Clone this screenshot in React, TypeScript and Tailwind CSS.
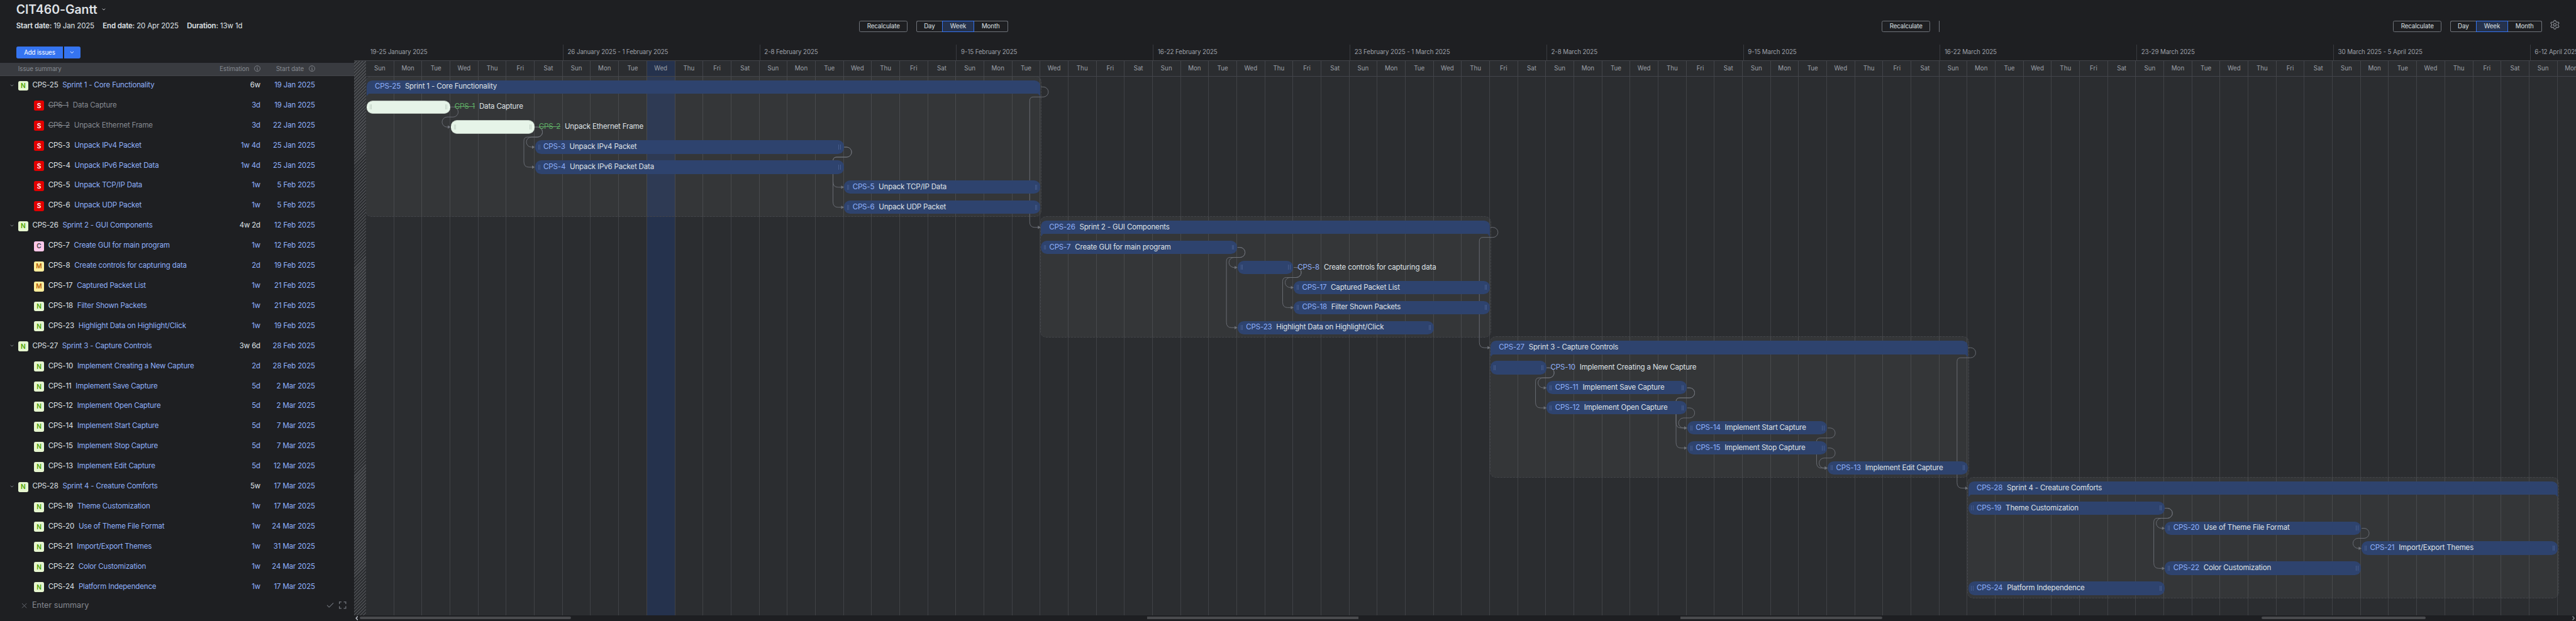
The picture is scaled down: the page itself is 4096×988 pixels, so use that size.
import { Check, ChevronDown, Settings, X } from "lucide-react";

type Tag = "N" | "S" | "C" | "M";

interface Issue {
  id: string;
  title: string;
  tag: Tag;
  estimation: string;
  date: string;
  start: number;
  end: number;
  sprint?: number;
  done?: boolean;
  outside?: boolean;
}

const DAY = 50.4;
const ROW = 36;

const issues: Issue[] = [
  { id: "CPS-25", title: "Sprint 1 - Core Functionality", tag: "N", estimation: "6w", date: "19 Jan 2025", start: 0, end: 24, sprint: 7 },
  { id: "CPS-1", title: "Data Capture", tag: "S", estimation: "3d", date: "19 Jan 2025", start: 0, end: 3, done: true, outside: true },
  { id: "CPS-2", title: "Unpack Ethernet Frame", tag: "S", estimation: "3d", date: "22 Jan 2025", start: 3, end: 6, done: true, outside: true },
  { id: "CPS-3", title: "Unpack IPv4 Packet", tag: "S", estimation: "1w 4d", date: "25 Jan 2025", start: 6, end: 17 },
  { id: "CPS-4", title: "Unpack IPv6 Packet Data", tag: "S", estimation: "1w 4d", date: "25 Jan 2025", start: 6, end: 17 },
  { id: "CPS-5", title: "Unpack TCP/IP Data", tag: "S", estimation: "1w", date: "5 Feb 2025", start: 17, end: 24 },
  { id: "CPS-6", title: "Unpack UDP Packet", tag: "S", estimation: "1w", date: "5 Feb 2025", start: 17, end: 24 },
  { id: "CPS-26", title: "Sprint 2 - GUI Components", tag: "N", estimation: "4w 2d", date: "12 Feb 2025", start: 24, end: 40, sprint: 6 },
  { id: "CPS-7", title: "Create GUI for main program", tag: "C", estimation: "1w", date: "12 Feb 2025", start: 24, end: 31 },
  { id: "CPS-8", title: "Create controls for capturing data", tag: "M", estimation: "2d", date: "19 Feb 2025", start: 31, end: 33, outside: true },
  { id: "CPS-17", title: "Captured Packet List", tag: "M", estimation: "1w", date: "21 Feb 2025", start: 33, end: 40 },
  { id: "CPS-18", title: "Filter Shown Packets", tag: "N", estimation: "1w", date: "21 Feb 2025", start: 33, end: 40 },
  { id: "CPS-23", title: "Highlight Data on Highlight/Click", tag: "N", estimation: "1w", date: "19 Feb 2025", start: 31, end: 38 },
  { id: "CPS-27", title: "Sprint 3 - Capture Controls", tag: "N", estimation: "3w 6d", date: "28 Feb 2025", start: 40, end: 57, sprint: 7 },
  { id: "CPS-10", title: "Implement Creating a New Capture", tag: "N", estimation: "2d", date: "28 Feb 2025", start: 40, end: 42, outside: true },
  { id: "CPS-11", title: "Implement Save Capture", tag: "N", estimation: "5d", date: "2 Mar 2025", start: 42, end: 47 },
  { id: "CPS-12", title: "Implement Open Capture", tag: "N", estimation: "5d", date: "2 Mar 2025", start: 42, end: 47 },
  { id: "CPS-14", title: "Implement Start Capture", tag: "N", estimation: "5d", date: "7 Mar 2025", start: 47, end: 52 },
  { id: "CPS-15", title: "Implement Stop Capture", tag: "N", estimation: "5d", date: "7 Mar 2025", start: 47, end: 52 },
  { id: "CPS-13", title: "Implement Edit Capture", tag: "N", estimation: "5d", date: "12 Mar 2025", start: 52, end: 57 },
  { id: "CPS-28", title: "Sprint 4 - Creature Comforts", tag: "N", estimation: "5w", date: "17 Mar 2025", start: 57, end: 78, sprint: 6 },
  { id: "CPS-19", title: "Theme Customization", tag: "N", estimation: "1w", date: "17 Mar 2025", start: 57, end: 64 },
  { id: "CPS-20", title: "Use of Theme File Format", tag: "N", estimation: "1w", date: "24 Mar 2025", start: 64, end: 71 },
  { id: "CPS-21", title: "Import/Export Themes", tag: "N", estimation: "1w", date: "31 Mar 2025", start: 71, end: 78 },
  { id: "CPS-22", title: "Color Customization", tag: "N", estimation: "1w", date: "24 Mar 2025", start: 64, end: 71 },
  { id: "CPS-24", title: "Platform Independence", tag: "N", estimation: "1w", date: "17 Mar 2025", start: 57, end: 64 },
];

/* Row index of the predecessor, row index of the successor. */
const links: [number, number][] = [
  [0, 7], [1, 2], [2, 3], [2, 4], [3, 5], [3, 6],
  [7, 13], [8, 9], [8, 12], [9, 10], [9, 11],
  [13, 20], [14, 15], [14, 16], [15, 17], [15, 18], [16, 17], [17, 19], [18, 19],
  [21, 22], [21, 24], [22, 23],
];

const weeks = [
  "19-25 January 2025",
  "26 January 2025 - 1 February 2025",
  "2-8 February 2025",
  "9-15 February 2025",
  "16-22 February 2025",
  "23 February 2025 - 1 March 2025",
  "2-8 March 2025",
  "9-15 March 2025",
  "16-22 March 2025",
  "23-29 March 2025",
  "30 March 2025 - 5 April 2025",
  "6-12 April 2025",
];

const dayNames = ["Sun", "Mon", "Tue", "Wed", "Thu", "Fri", "Sat"];
const days = Array.from({ length: 79 }, (_, i) => i);
const TODAY = 10;

const tagStyle: Record<Tag, string> = {
  N: "bg-[#e6f6cf] text-[#4da400]",
  S: "bg-[#e30000] text-white",
  C: "bg-[#ffc8ea] text-[#444444]",
  M: "bg-[#ffee9c] text-[#b45f06]",
};

function linkPath(from: number, to: number) {
  const x1 = issues[from].end * DAY + 0.6;
  const x2 = issues[to].start * DAY + 0.2;
  const y1 = from * ROW + 19.5;
  const y2 = to * ROW + 19.5;
  const head = `M${x1} ${y1}h4.5a9 9 0 0 1 0 18`;
  if (to - from === 1) {
    return `${head}H${x2 - 6}a9 9 0 0 0 0 18H${x2 - 3}`;
  }
  return `${head}H${x2 - 13}q-6.5 0 -6.5 7V${y2 - 10}q0 10 9 10H${x2 - 3}`;
}

function InfoIcon() {
  return (
    <svg viewBox="0 0 12 12" className="size-[11.5px]" fill="none" stroke="#868a91">
      <circle cx="6" cy="6" r="5.3" />
      <path d="M4.7 5.2H6.2V8.6M4.6 8.7H7.6" strokeWidth="0.9" />
      <circle cx="6" cy="3.3" r="0.4" fill="#868a91" strokeWidth="0.5" />
    </svg>
  );
}

function ExpandIcon() {
  return (
    <svg viewBox="0 0 13 13" className="ml-[8px] size-[13px]" fill="none" stroke="currentColor" strokeWidth="1.5">
      <path d="M0.75 4.5V0.75H4.5M8.5 0.75H12.25V4.5M12.25 8.5V12.25H8.5M4.5 12.25H0.75V8.5" />
    </svg>
  );
}

function Recalculate() {
  return (
    <button className="flex h-[21px] w-[87px] items-center justify-center rounded-[3px] border border-[#6f737a] text-[11px] leading-none tracking-[-0.12px] text-[#dfe1e5]">
      Recalculate
    </button>
  );
}

function ScaleSwitch() {
  return (
    <div className="ml-[15px] flex h-[21px] text-[11px] leading-none tracking-[-0.12px] text-[#dfe1e5]">
      <button className="flex w-[47px] items-center justify-center rounded-l-[3px] border border-r-0 border-[#6f737a]">Day</button>
      <button className="flex w-[57px] items-center justify-center border border-[#3574f0] bg-[#25324d]">Week</button>
      <button className="flex w-[61px] items-center justify-center rounded-r-[3px] border border-l-0 border-[#6f737a]">Month</button>
    </div>
  );
}

function IssueRow({ issue }: { issue: Issue }) {
  return (
    <div className="flex h-9 items-center text-[13px] leading-none tracking-[-0.18px]">
      <div className={`flex w-[397px] items-center whitespace-nowrap ${issue.sprint ? "pl-[17px]" : "pl-[61px]"}`}>
        {issue.sprint && <ChevronDown className="mr-[6.5px] mb-[2px] size-[9px] text-[#868a91]" strokeWidth={2.6} />}
        <span className={`flex size-[18px] shrink-0 items-center justify-center rounded-[3px] pb-px text-[11.5px] font-semibold tracking-normal ${tagStyle[issue.tag]}`}>
          {issue.tag}
        </span>
        <span className={`mb-[1.8px] ml-[7.5px] ${issue.done ? "text-[#868a91] line-through" : "text-[#dfe1e5]"}`}>{issue.id}</span>
        <span className={`mb-[1.8px] ml-[7.7px] ${issue.done ? "text-[#868a91]" : "text-[#8fb0fa]"}`}>{issue.title}</span>
      </div>
      <span className={`mb-[1.8px] w-[70px] text-right ${issue.sprint ? "text-[#dfe1e5]" : "text-[#8fb0fa]"}`}>{issue.estimation}</span>
      <span className="mb-[1.8px] w-[98px] text-right text-[#8fb0fa]">{issue.date}</span>
    </div>
  );
}

function IssuePanel() {
  return (
    <aside className="flex w-[635px] shrink-0 flex-col">
      <header className="h-[113px] pl-[29px]">
        <h1 className="flex items-center gap-[7px] pt-[4px] text-[22px] leading-[25px] font-semibold tracking-[-0.08px] text-[#dfe1e5]">
          CIT460-Gantt
          <ChevronDown className="size-[9px]" strokeWidth={2.6} />
        </h1>
        <p className="mt-[9px] flex gap-[15px] text-[13px] leading-[17px] tracking-[-0.18px] text-[#dfe1e5]">
          <span><b className="font-semibold">Start date:</b> 19 Jan 2025</span>
          <span><b className="font-semibold">End date:</b> 20 Apr 2025</span>
          <span><b className="font-semibold">Duration:</b> 13w 1d</span>
        </p>
        <div className="mt-[29px] flex h-[21px] gap-[2px] text-white">
          <button className="flex w-[84px] items-center justify-center rounded-l-[3px] bg-[#3574f0] text-[11px] leading-none tracking-[-0.12px]">
            Add issues
          </button>
          <button className="flex w-[29px] items-center justify-center rounded-r-[3px] bg-[#3574f0]">
            <ChevronDown className="size-[10px]" strokeWidth={2.6} />
          </button>
        </div>
      </header>
      <div className="flex h-[23px] items-center border-b border-[#43454a] bg-[#393b40] pb-px text-[11px] leading-none tracking-[-0.08px] text-[#868a91]">
        <span className="w-[369px] pl-[32.5px]">Issue summary</span>
        <span className="flex w-[98px] items-center justify-end gap-[8.5px]">Estimation <InfoIcon /></span>
        <span className="flex w-[98px] items-center justify-end gap-[8.5px]">Start date <InfoIcon /></span>
      </div>
      <div className="h-[936px]">
        {issues.map((issue) => <IssueRow key={issue.id} issue={issue} />)}
      </div>
      <div className="flex h-[29px] items-center pr-[14px] pl-[36px] text-[#6f737a]">
        <X className="size-[15px]" strokeWidth={1.6} />
        <span className="ml-[6.5px] flex-1 text-[14.3px] leading-none text-[#868a91]">Enter summary</span>
        <Check className="size-[16px]" strokeWidth={1.8} />
        <ExpandIcon />
      </div>
    </aside>
  );
}

function Handle({ light }: { light?: boolean }) {
  return <span className={`h-[9px] w-[3.6px] border-x ${light ? "border-[#c3d3c6]" : "border-[#465c8c]"}`} />;
}

function Label({ issue }: { issue: Issue }) {
  return (
    <span className="flex gap-[7.7px] text-[13px] leading-none tracking-[-0.18px] whitespace-nowrap">
      <span className={issue.done ? "text-[#5fad65] line-through" : "text-[#8fb0fa]"}>{issue.id}</span>
      <span className="text-[#dfe1e5]">{issue.title}</span>
    </span>
  );
}

function Bar({ issue }: { issue: Issue }) {
  const width = (issue.end - issue.start) * DAY - 0.8;
  const place = { marginLeft: issue.start * DAY + 0.6, width };
  if (issue.sprint) {
    return (
      <div className="h-9 pt-2">
        <div className="relative flex h-6 items-center rounded-t-[10px] bg-[#2e436e] pl-[15px]" style={place}>
          <Label issue={issue} />
          <span className="absolute top-full left-0 size-[4.5px] bg-[#2e436e] [clip-path:polygon(0_0,100%_0,0_100%)]" />
          <span className="absolute top-full right-0 size-[4.5px] bg-[#2e436e] [clip-path:polygon(0_0,100%_0,100%_100%)]" />
        </div>
      </div>
    );
  }
  return (
    <div className="flex h-9 items-center pt-[4px]">
      <div
        className={`flex h-6 shrink-0 items-center rounded-[11px] px-[5.5px] ${issue.done ? "border-y border-[#b9c4bb] bg-[#e6f4e8]" : "bg-[#2e436e]"}`}
        style={place}
      >
        <Handle light={issue.done} />
        <span className="flex-1 pl-[6px]">{!issue.outside && <Label issue={issue} />}</span>
        <Handle light={issue.done} />
      </div>
      {issue.outside && <span className="ml-[7.7px]"><Label issue={issue} /></span>}
    </div>
  );
}

function Chart() {
  return (
    <div className="flex h-[968px] bg-[#2b2d30]">
      <div className="w-[21.6px] shrink-0" />
      <div className="relative flex-1 overflow-hidden">
        <div className="absolute inset-0 flex">
          {days.map((d) => (
            <div key={d} className={`h-full w-[50.4px] shrink-0 border-r border-[#404246] ${d === TODAY ? "bg-[#25324d]" : ""}`} />
          ))}
        </div>
        {issues.map((issue, i) =>
          issue.sprint ? (
            <div
              key={issue.id}
              className="absolute rounded-[11px] border border-dashed border-[#43454a] bg-[#fff8f80b]"
              style={{
                left: issue.start * DAY - 1,
                top: i * ROW,
                width: (issue.end - issue.start) * DAY + 3,
                height: issue.sprint * ROW + 1.5,
              }}
            />
          ) : null,
        )}
        <svg className="absolute inset-0" width="3964" height="968" fill="none" stroke="#6f737a">
          {links.map(([a, b]) => (
            <g key={`${a}-${b}`}>
              <path d={linkPath(a, b)} />
              <path
                d={`M${issues[b].start * DAY + 0.4} ${b * ROW + 19.5}l-5 -3v6z`}
                fill="#6f737a"
                stroke="none"
              />
            </g>
          ))}
        </svg>
        <div className="relative">
          {issues.map((issue) => <Bar key={issue.id} issue={issue} />)}
        </div>
      </div>
    </div>
  );
}

function Timeline() {
  return (
    <main className="flex min-w-0 flex-1 flex-col overflow-hidden">
      <div className="flex h-[80px] items-start pt-[37px] pl-[906px]">
        <Recalculate />
        <ScaleSwitch />
        <div className="ml-[1567px]"><Recalculate /></div>
        <div className="ml-[15px] h-[21px] w-[2px] rounded-l-[3px] border border-r-0 border-[#6f737a]" />
        <div className="ml-[813px]"><Recalculate /></div>
        <ScaleSwitch />
        <Settings className="-mt-[1.5px] ml-[13.5px] size-[19px] text-[#868a91]" strokeWidth={1.8} />
      </div>
      <div className="flex h-[28px] pl-[21.6px] text-[11px] leading-none tracking-[-0.12px] text-[#9da0a8]">
        {weeks.map((w, i) => (
          <div key={w} className={`flex w-[352.8px] shrink-0 items-center pb-[2px] pl-[7.5px] whitespace-nowrap ${i > 0 ? "border-l border-[#393b40]" : ""}`}>
            {w}
          </div>
        ))}
      </div>
      <div className="relative flex-1 bg-[#2b2d30]">
        <div className="flex h-[28px] border-t border-[#43454a] pl-[21.6px] text-[11px] leading-none text-[#9da0a8]">
          {days.map((d) => (
            <div key={d} className={`flex w-[50.4px] shrink-0 items-center justify-center border-r border-[#43454a] ${d === TODAY ? "bg-[#25324d]" : ""}`}>
              {dayNames[d % 7]}
            </div>
          ))}
        </div>
        <Chart />
        <div className="absolute top-[28px] right-0 left-0 h-px bg-[#43454a]" />
        <div className="absolute top-px bottom-0 left-0 w-[21.6px] bg-[repeating-linear-gradient(135deg,#2b2d30_0px,#2b2d30_2px,#4a4c50_2px,#4a4c50_4px)]" />
      </div>
      <div className="flex h-[11px] items-start bg-[#1e1f22] pt-[3px]">
        <svg className="-mt-[2px] ml-[2px] h-[8px] w-[5px]" viewBox="0 0 5 8" fill="none" stroke="#b4b8bf" strokeWidth="1.8">
          <path d="M4.4 0.6L1.4 4L4.4 7.4" />
        </svg>
        <span className="ml-[3px] h-[4px] w-[379px] shrink-0 rounded-full bg-[#4a4b4e]" />
        <span className="ml-[1033.6px] h-[4px] w-[379px] shrink-0 bg-[#4a4b4e]" />
        <span className="ml-[577px] h-[4px] w-[362px] shrink-0 rounded-r-full bg-[#4a4b4e]" />
        <span className="ml-[680px] h-[4px] w-[295px] shrink-0 rounded-full bg-[#4a4b4e]" />
        <svg className="-mt-[2px] ml-[263px] h-[8px] w-[5px] shrink-0" viewBox="0 0 5 8" fill="none" stroke="#868a91" strokeWidth="1.6">
          <path d="M0.6 0.6L3.6 4L0.6 7.4" />
        </svg>
      </div>
    </main>
  );
}

export default function App() {
  return (
    <div className="h-screen w-screen overflow-hidden bg-[#1e1f22] font-[Inter,sans-serif]">
      <div className="flex h-[1115px] w-[4621px] [zoom:0.88658]">
        <IssuePanel />
        <Timeline />
      </div>
    </div>
  );
}
